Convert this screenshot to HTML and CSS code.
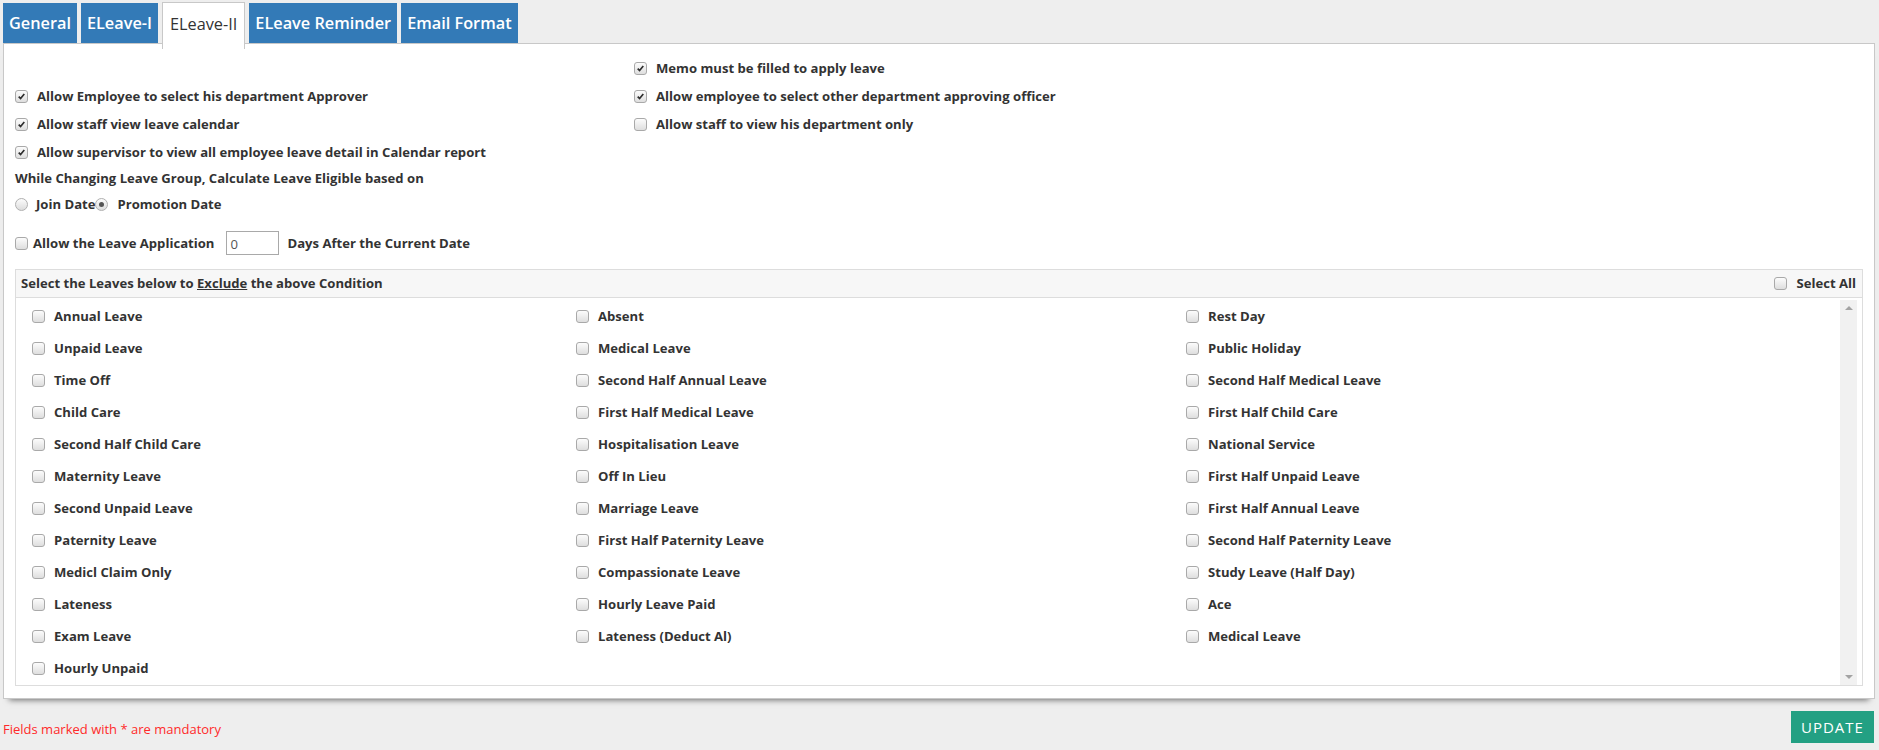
FILE: index.html
```html
<!DOCTYPE html>
<html>
<head>
<meta charset="utf-8">
<link rel="stylesheet" href="styles.css">
</head>
<body>
<div class="tabs">
  <div class="tab">General</div>
  <div class="tab">ELeave-I</div>
  <div class="tab active">ELeave-II</div>
  <div class="tab">ELeave Reminder</div>
  <div class="tab">Email Format</div>
</div>
<div class="panel">
  <div class="opts">
    <div class="opt"></div>
    <label class="opt"><span class="cb on"><svg viewBox="0 0 13 13"><path d="M3.2 6.6 L5.4 8.9 L9.8 3.6"/></svg></span>Memo must be filled to apply leave</label>
    <label class="opt"><span class="cb on"><svg viewBox="0 0 13 13"><path d="M3.2 6.6 L5.4 8.9 L9.8 3.6"/></svg></span>Allow Employee to select his department Approver</label>
    <label class="opt"><span class="cb on"><svg viewBox="0 0 13 13"><path d="M3.2 6.6 L5.4 8.9 L9.8 3.6"/></svg></span>Allow employee to select other department approving officer</label>
    <label class="opt"><span class="cb on"><svg viewBox="0 0 13 13"><path d="M3.2 6.6 L5.4 8.9 L9.8 3.6"/></svg></span>Allow staff view leave calendar</label>
    <label class="opt"><span class="cb"></span>Allow staff to view his department only</label>
    <label class="opt"><span class="cb on"><svg viewBox="0 0 13 13"><path d="M3.2 6.6 L5.4 8.9 L9.8 3.6"/></svg></span>Allow supervisor to view all employee leave detail in Calendar report</label>
    <div class="opt"></div>
  </div>
  <div class="line">While Changing Leave Group, Calculate Leave Eligible based on</div>
  <div class="radios">
    <span class="rb"></span><span class="rlabel">Join Date</span><span class="rb on"></span><span class="rlabel second">Promotion Date</span>
  </div>
  <div class="after">
    <span class="cb"></span><span class="after-label">Allow the Leave Application</span>
    <span class="days-input">0</span>
    <span class="after-tail">Days After the Current Date</span>
  </div>
  <div class="exclude">
    <div class="ex-head">
      <span>Select the Leaves below to <u>Exclude</u> the above Condition</span>
      <span class="sel-all"><span class="cb"></span>Select All</span>
    </div>
    <div class="ex-body">
      <div class="leaves">
        <label class="leave"><span class="cb"></span>Annual Leave</label>
        <label class="leave"><span class="cb"></span>Absent</label>
        <label class="leave"><span class="cb"></span>Rest Day</label>
        <label class="leave"><span class="cb"></span>Unpaid Leave</label>
        <label class="leave"><span class="cb"></span>Medical Leave</label>
        <label class="leave"><span class="cb"></span>Public Holiday</label>
        <label class="leave"><span class="cb"></span>Time Off</label>
        <label class="leave"><span class="cb"></span>Second Half Annual Leave</label>
        <label class="leave"><span class="cb"></span>Second Half Medical Leave</label>
        <label class="leave"><span class="cb"></span>Child Care</label>
        <label class="leave"><span class="cb"></span>First Half Medical Leave</label>
        <label class="leave"><span class="cb"></span>First Half Child Care</label>
        <label class="leave"><span class="cb"></span>Second Half Child Care</label>
        <label class="leave"><span class="cb"></span>Hospitalisation Leave</label>
        <label class="leave"><span class="cb"></span>National Service</label>
        <label class="leave"><span class="cb"></span>Maternity Leave</label>
        <label class="leave"><span class="cb"></span>Off In Lieu</label>
        <label class="leave"><span class="cb"></span>First Half Unpaid Leave</label>
        <label class="leave"><span class="cb"></span>Second Unpaid Leave</label>
        <label class="leave"><span class="cb"></span>Marriage Leave</label>
        <label class="leave"><span class="cb"></span>First Half Annual Leave</label>
        <label class="leave"><span class="cb"></span>Paternity Leave</label>
        <label class="leave"><span class="cb"></span>First Half Paternity Leave</label>
        <label class="leave"><span class="cb"></span>Second Half Paternity Leave</label>
        <label class="leave"><span class="cb"></span>Medicl Claim Only</label>
        <label class="leave"><span class="cb"></span>Compassionate Leave</label>
        <label class="leave"><span class="cb"></span>Study Leave (Half Day)</label>
        <label class="leave"><span class="cb"></span>Lateness</label>
        <label class="leave"><span class="cb"></span>Hourly Leave Paid</label>
        <label class="leave"><span class="cb"></span>Ace</label>
        <label class="leave"><span class="cb"></span>Exam Leave</label>
        <label class="leave"><span class="cb"></span>Lateness (Deduct Al)</label>
        <label class="leave"><span class="cb"></span>Medical Leave</label>
        <label class="leave"><span class="cb"></span>Hourly Unpaid</label>
      </div>
      <div class="vscroll">
        <span class="arrow up"></span>
        <span class="arrow down"></span>
      </div>
    </div>
  </div>
</div>
<div class="footer">
  <span class="mandatory">Fields marked with * are mandatory</span>
  <span class="update">UPDATE</span>
</div>
</body>
</html>
```
FILE: styles.css
```css
html, body {
  height: 100%;
}
body {
  margin: 0;
  padding: 3px 4px 0 3px;
  box-sizing: border-box;
  background: #eeeeee;
  font-family: "Open Sans", "Liberation Sans", sans-serif;
  font-size: 13.1px;
  color: #333;
  overflow: hidden;
}

/* tabs */
.tabs {
  display: flex;
  gap: 4px;
  height: 40px;
  align-items: flex-start;
}
.tab {
  height: 40px;
  box-sizing: border-box;
  padding: 0 6px;
  display: flex;
  align-items: center;
  background: #337ab7;
  color: #fff;
  font-size: 16.3px;
  font-weight: 600;
  white-space: nowrap;
}
.tab.active {
  position: relative;
  z-index: 1;
  height: 47px;
  margin-top: -1px;
  padding: 0 7px 5px;
  background: #fff;
  color: #333;
  font-weight: 400;
  border: 1px solid #c8c8c8;
  border-bottom: 0;
}

/* panel */
.panel {
  background: #fff;
  border: 1px solid #c8c8c8;
  padding: 10px 11px 12px;
  box-shadow: 0 7px 6px -6px rgba(0, 0, 0, 0.55);
}

.cb {
  flex: none;
  width: 13px;
  height: 13px;
  box-sizing: border-box;
  border: 1px solid #a9a9a9;
  border-radius: 3px;
  background: linear-gradient(#fcfcfc, #dedede);
  display: inline-flex;
}
.cb svg {
  width: 11px;
  height: 11px;
}
.cb path {
  fill: none;
  stroke: #2e2e2e;
  stroke-width: 2;
}

.opts {
  display: grid;
  grid-template-columns: 619px 1fr;
  grid-auto-rows: 28px;
}
.opt {
  display: flex;
  align-items: center;
  gap: 9px;
  font-weight: 700;
  white-space: nowrap;
}

.line {
  height: 24px;
  display: flex;
  align-items: center;
  font-weight: 700;
}

.radios {
  height: 28px;
  display: flex;
  align-items: center;
  font-weight: 700;
}
.rb {
  flex: none;
  width: 13px;
  height: 13px;
  box-sizing: border-box;
  border: 1px solid #b0b0b0;
  border-radius: 50%;
  background: linear-gradient(#fcfcfc, #dcdcdc);
  display: inline-flex;
  align-items: center;
  justify-content: center;
}
.rb.on::after {
  content: "";
  width: 5px;
  height: 5px;
  border-radius: 50%;
  background: #555;
}
.rlabel {
  margin-left: 8px;
}
.rlabel.second {
  margin-left: 9px;
}

.after {
  margin-top: 13px;
  height: 24px;
  display: flex;
  align-items: center;
  font-weight: 700;
}
.after-label {
  margin-left: 5px;
}
.days-input {
  margin-left: 12px;
  width: 53px;
  height: 24px;
  box-sizing: border-box;
  border: 1px solid #a9a9a9;
  padding: 3px 3px 0;
  font-weight: 400;
  color: #555;
}
.after-tail {
  margin-left: 8px;
}

/* exclude box */
.exclude {
  margin-top: 14px;
  border: 1px solid #dddddd;
}
.ex-head {
  height: 28px;
  box-sizing: border-box;
  background: #f7f7f7;
  border-bottom: 1px solid #dddddd;
  display: flex;
  align-items: center;
  justify-content: space-between;
  padding: 0 6px 1px 5px;
  font-weight: 700;
}
.sel-all {
  display: flex;
  align-items: center;
  gap: 9px;
}
.ex-body {
  display: flex;
  padding: 2px 5px 0 0;
}
.leaves {
  flex: 1;
  display: grid;
  grid-template-columns: 544px 610px 1fr;
  grid-auto-rows: 32px;
  padding-left: 16px;
  height: 385px;
  align-content: start;
}
.leave {
  display: flex;
  align-items: center;
  gap: 9px;
  font-weight: 700;
  white-space: nowrap;
}
.vscroll {
  width: 17px;
  background: #f1f1f1;
  display: flex;
  flex-direction: column;
  justify-content: space-between;
  align-items: center;
  padding: 6px 0;
  box-sizing: border-box;
}
.arrow {
  width: 0;
  height: 0;
  border-left: 4px solid transparent;
  border-right: 4px solid transparent;
}
.arrow.up {
  border-bottom: 4px solid #a3a3a3;
}
.arrow.down {
  border-top: 4px solid #a3a3a3;
}

/* footer */
.footer {
  margin-top: 12px;
  display: flex;
  justify-content: space-between;
  align-items: center;
}
.mandatory {
  color: #ff2a2a;
  font-size: 13px;
  padding-top: 4px;
}
.update {
  width: 83px;
  height: 32px;
  box-sizing: border-box;
  margin-right: 1px;
  background: #23a083;
  color: #fff;
  font-size: 15px;
  letter-spacing: 1px;
  display: flex;
  align-items: center;
  justify-content: center;
}
```
